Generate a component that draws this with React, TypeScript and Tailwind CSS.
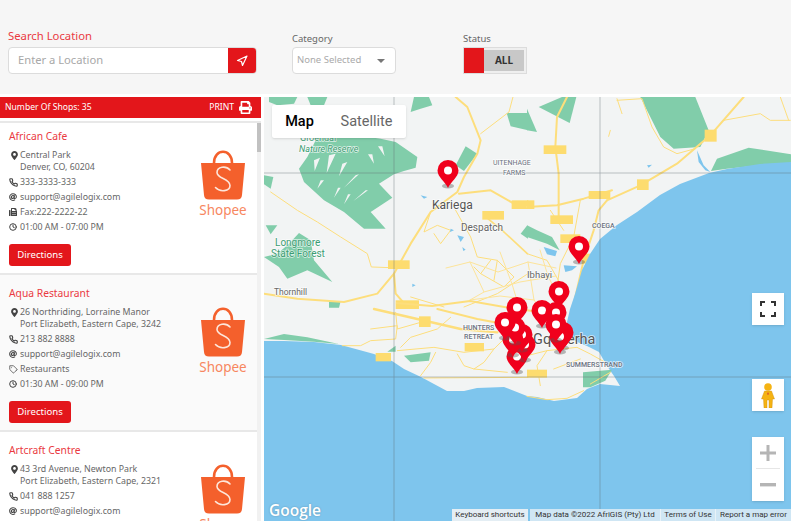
import React from "react";
import { FaMapMarkerAlt, FaFax, FaPrint, FaAt } from "react-icons/fa";
import { FiClock, FiNavigation, FiTag, FiPhone } from "react-icons/fi";

type Shop = {
  name: string;
  address: string[];
  phone: string;
  extra: { kind: "fax" | "tag"; text: string };
  hours: string;
};

const shops: Shop[] = [
  {
    name: "African Cafe",
    address: ["Central Park", "Denver, CO, 60204"],
    phone: "333-3333-333",
    extra: { kind: "fax", text: "Fax:222-2222-22" },
    hours: "01:00 AM - 07:00 PM",
  },
  {
    name: "Aqua Restaurant",
    address: ["26 Northriding, Lorraine Manor", "Port Elizabeth, Eastern Cape, 3242"],
    phone: "213 882 8888",
    extra: { kind: "tag", text: "Restaurants" },
    hours: "01:30 AM - 09:00 PM",
  },
  {
    name: "Artcraft Centre",
    address: ["43 3rd Avenue, Newton Park", "Port Elizabeth, Eastern Cape, 2321"],
    phone: "041 888 1257",
    extra: { kind: "tag", text: "Restaurants" },
    hours: "09:00 AM - 05:00 PM",
  },
];

// [centre x, top y] of each marker, back to front
const pins: [number, number][] = [
  [448, 161], [579, 237], [559, 282], [517, 298], [542, 301], [556, 303], [517, 347],
  [525, 335], [522, 325], [513, 330], [515, 318], [505, 313], [563, 323], [560, 327], [556, 315],
];

function ShopeeLogo() {
  return (
    <div className="flex w-[48px] flex-col items-center">
      <svg width="46" height="50" viewBox="0 0 46 50">
        <path d="M14 13 C14 -2 32 -2 32 13" fill="none" stroke="#f4602c" strokeWidth="2.6" />
        <path d="M1 13 H45 L42 45 Q41.7 49.5 37 49.5 H9 Q4.3 49.5 4 45 Z" fill="#f4602c" />
        <path d="M30 20 C26 15.5 17 16.5 17 22.5 C17 29 30 28 30 35.5 C30 41.5 20 42.5 15.5 37.5" fill="none" stroke="#fde6da" strokeWidth="1.6" strokeLinecap="round" />
      </svg>
      <span className="mt-[2px] text-[13.5px] leading-[17px] text-[#f7875f]">Shopee</span>
    </div>
  );
}

function Row({ icon, children }: { icon: React.ReactNode; children: React.ReactNode }) {
  return (
    <div className="mt-[3px] flex items-start first:mt-0">
      <span className="flex h-[12px] w-[11px] shrink-0 items-center text-[#444]">{icon}</span>
      <div className="leading-[12px]">{children}</div>
    </div>
  );
}

function ShopCard({ shop }: { shop: Shop }) {
  return (
    <div className="flex justify-between border-b-2 border-[#e8e8e8] pb-[7px] pl-[9px] pr-[10px] pt-[12px] first:pt-[7px] even:bg-[#fafafa]">
      <div>
        <h3 className="mb-[7px] text-[10.3px] leading-[12px] text-[#ea3a42]">{shop.name}</h3>
        <div className="text-[8.8px] text-[#666]">
          <Row icon={<FaMapMarkerAlt className="ml-[1px] text-[9px]" />}>
            {shop.address.map((line) => (
              <div key={line}>{line}</div>
            ))}
          </Row>
          <Row icon={<FiPhone className="text-[9px]" strokeWidth={3} />}>{shop.phone}</Row>
          <Row icon={<FaAt className="text-[8px]" />}>support@agilelogix.com</Row>
          <Row icon={shop.extra.kind === "fax" ? <FaFax className="text-[8px]" /> : <FiTag className="text-[9px]" />}>
            {shop.extra.text}
          </Row>
          <Row icon={<FiClock className="text-[8px]" strokeWidth={3} />}>{shop.hours}</Row>
        </div>
        <button className="mt-[11px] h-[22px] w-[62px] rounded-[3px] bg-[#e3161b] text-[9.6px] text-white">Directions</button>
      </div>
      <div className="mt-[20px]">
        <ShopeeLogo />
      </div>
    </div>
  );
}

function Pin({ x, y }: { x: number; y: number }) {
  return (
    <g transform={`translate(${x} ${y})`}>
      <ellipse cx="0" cy="25" rx="6" ry="2.5" fill="#555" opacity="0.4" />
      <path d="M0 27 C-2.5 21 -10.5 16 -10.5 9.5 A10.5 10.5 0 0 1 10.5 9.5 C10.5 16 2.5 21 0 27 Z" fill="#f0001c" />
      <circle cx="0" cy="9.5" r="4" fill="#fff" />
    </g>
  );
}

function MapArt() {
  return (
    <svg className="block h-full w-full" viewBox="264 97 527 424" fontFamily="Roboto, sans-serif">
      <rect x="264" y="97" width="527" height="424" fill="#f2f4f4" />

      {/* top left part of the map, drawn in 3x crop coordinates */}
      <g transform="translate(264 97) scale(0.3333)">
        <g fill="#81cdaa">
          <path d="M15 0 H100 L90 20 L40 25 L15 15 Z" />
          <path d="M130 0 H190 L180 25 H140 Z" />
          <path d="M450 0 H495 L505 25 L470 35 L440 45 Z" />
          <path d="M105 215 L130 180 L160 120 L280 115 L350 125 L395 135 L460 180 L455 212 L420 222 L390 232 L345 260 L385 302 L320 345 L365 395 L300 395 L240 345 L180 310 L120 255 Z" />
          <path d="M605 148 L640 170 L600 222 L575 205 Z" />
          <path d="M728 48 H792 V100 L740 88 Z" />
          <path d="M0 235 L28 240 L20 275 L0 262 Z" />
          <path d="M5 385 H40 L20 412 Z" />
          <path d="M0 480 L40 470 L75 440 L105 408 L140 430 L150 490 L205 555 L130 520 L70 545 L45 510 Z" />
          <path d="M790 385 L770 410 L792 425 Z" />
          <path d="M195 612 H230 L225 632 H195 Z" />
        </g>
        <g fill="#f2f4f4">
          <path d="M150 190 L168 182 L152 222 Z M195 175 L215 170 L188 228 Z M235 200 L250 195 L225 238 Z M275 235 L285 232 L240 272 Z M305 280 L312 280 L268 312 Z M222 272 L230 272 L210 302 Z M330 200 L312 172 L325 172 Z M362 178 L342 148 L355 148 Z M252 292 L260 292 L240 322 Z M170 250 L180 250 L160 275 Z" />
        </g>
        <g fill="none" stroke="#fdde7c" strokeLinecap="round" strokeLinejoin="round">
          <path strokeWidth="6" d="M575 0 L610 30 L650 130 L640 170 L600 240 L580 285 L500 345 L440 440 L390 530 L340 590 L240 615 L100 605 L0 590" />
          <path strokeWidth="6" d="M585 290 L680 280 L750 320 L792 320" />
          <path strokeWidth="6" d="M390 530 L395 590 L430 630" />
          <path strokeWidth="5" d="M660 355 L720 405 L790 470" />
          <path strokeWidth="3" d="M650 110 L735 45 L747 0" />
          <path strokeWidth="3" d="M20 285 L100 340 L160 375 L230 420 L310 470 L322 510 L380 512" />
          <path strokeWidth="3" d="M500 345 L480 405 L520 385 L560 400 L530 440 L510 410 M575 340 L620 420 L640 480 L700 490 L750 540 L720 570 L650 530 L630 510 M680 490 L650 530 M700 490 L690 550" />
          <path strokeWidth="3" d="M440 600 L540 630 M600 630 L700 590 L792 530" />
        </g>
        <g fill="#fddc6f">
          <rect x="372" y="490" width="65" height="26" />
          <rect x="395" y="610" width="70" height="26" />
          <rect x="743" y="310" width="50" height="26" />
          <rect x="655" y="342" width="65" height="26" />
        </g>
        <g fill="#7ec5ed">
          <path d="M580 415 L600 420 L590 435 Z M595 450 L605 458 L598 462 Z M560 395 L570 400 L558 405 Z M470 295 L490 300 L480 305 Z M445 560 L455 565 L445 570 Z" />
        </g>
      </g>

      {/* top right part */}
      <g transform="translate(527 97) scale(0.3333)">
        <g fill="#81cdaa">
          <path d="M340 0 H505 L545 100 L520 150 L440 155 L400 120 L370 60 Z" />
          <path d="M552 222 L570 185 L665 152 L792 172 V200 L700 205 L600 215 Z" />
          <path d="M35 30 L105 0 H148 L128 78 Z" />
          <path d="M0 35 L30 105 L0 100 Z" />
          <path d="M0 385 L30 400 L75 420 L98 460 L60 440 L0 420 Z" />
        </g>
        <g fill="none" stroke="#fdde7c" strokeLinecap="round" strokeLinejoin="round">
          <path strokeWidth="6" d="M120 0 L90 60 L85 150 L95 230 L95 360" />
          <path strokeWidth="6" d="M0 330 L90 325 L170 305 L255 280" />
          <path strokeWidth="6" d="M240 310 L340 265 L450 200 L550 115 L650 0" />
          <path strokeWidth="6" d="M240 310 L215 340 L200 400 L170 490 L145 600" />
          <path strokeWidth="3" d="M270 5 L285 50 M270 10 L345 5 L375 90 L410 150 L450 170 L505 155" />
          <path strokeWidth="3" d="M590 70 L700 50 L730 70 L790 70 M760 0 L785 70" />
          <path strokeWidth="3" d="M160 310 L140 420 L100 500 L90 570 M70 340 L110 400 M0 470 L60 490 L100 560" />
          <path strokeWidth="3" d="M250 100 L245 118" />
        </g>
        <g fill="#fddc6f">
          <rect x="50" y="145" width="68" height="26" />
          <rect x="185" y="282" width="65" height="24" />
          <rect x="330" y="247" width="35" height="32" />
          <rect x="533" y="98" width="36" height="36" />
          <rect x="70" y="355" width="68" height="26" />
          <rect x="100" y="412" width="60" height="26" />
          <rect x="0" y="310" width="22" height="26" />
          <rect x="165" y="470" width="25" height="30" />
        </g>
        <g fill="#7ec5ed">
          <path d="M510 160 L530 205 L550 225 L535 220 L515 195 Z" />
          <path d="M360 205 L375 203 L365 212 Z" />
          <path d="M50 450 L90 462 L85 478 L60 472 Z" />
          <path d="M110 505 L150 508 L135 520 L115 525 Z" />
        </g>
      </g>

      {/* suburbs between Despatch and the city */}
      <g fill="none" stroke="#fde49a" strokeWidth="1" strokeLinecap="round" strokeLinejoin="round">
        <path d="M470 262 L498 272 L528 262 L556 268 M484 292 L520 282 L556 276 M500 252 L512 284 L520 310 M528 262 L534 300 L548 318 M470 300 L500 296 L534 300 M446 268 L470 262 L484 292 L470 300 M540 250 L548 276 L556 292 L566 300" />
      </g>
      <path d="M396 303 L432 306 L470 301 L510 308 L540 312" fill="none" stroke="#fdde7c" strokeWidth="1.8" strokeLinejoin="round" />

      {/* water */}
      <path
        fill="#7ec5ed"
        d="M791 162 L760 164 L727 169 L709 173 L680 184 L660 195 L637 212 L617 225 L600 239 L590 254 L582 270 L575 294 L570 309 L567 322 L570 339 L587 346 L599 352 L607 366 L614 376 L620 386 L600 384 L587 389 L577 398 L554 401 L537 397 L527 396 L504 387 L477 388 L464 391 L447 391 L434 384 L421 377 L404 369 L392 361 L374 354 L341 345 L314 342 L284 341 L264 341 V521 H791 Z"
      />

      {/* lower part */}
      <g transform="translate(264 309) scale(0.3333)">
        <g fill="#81cdaa">
          <path d="M0 90 L60 75 L130 85 L225 105 L150 98 L60 93 Z" />
          <path d="M420 140 L500 130 L495 155 L440 160 Z" />
          <path d="M370 128 L395 110 L395 128 Z" />
        </g>
        <g fill="none" stroke="#fdde7c" strokeLinecap="round" strokeLinejoin="round">
          <path strokeWidth="7" d="M330 0 L460 30 L590 60 L700 70" />
          <path strokeWidth="6" d="M520 0 L640 30 L720 45" />
          <path strokeWidth="3" d="M395 10 L400 60 L470 40 M410 115 L440 85 L520 60 L560 25 M320 60 L400 50 L395 90 L320 95 L290 110 L235 110 M400 125 L510 115 L600 130 L690 120 L720 90 M580 135 L600 170 L630 180 L730 190 M470 200 L500 160 L515 130 M630 180 L660 160 L690 120 M480 207 L792 205" />
        </g>
        <g fill="#fddc6f">
          <rect x="465" y="22" width="35" height="32" />
          <rect x="335" y="132" width="46" height="25" />
          <rect x="602" y="102" width="58" height="25" />
        </g>
      </g>
      <g transform="translate(527 309) scale(0.3333)">
        <path d="M168 190 L255 182 L235 215 L190 235 L168 235 Z" fill="#81cdaa" />
        <g fill="none" stroke="#fdde7c" strokeLinecap="round" strokeLinejoin="round">
          <path strokeWidth="3" d="M0 140 L60 125 L150 115 L190 135 L235 160 M60 125 L30 170 L40 230 M0 262 L60 272 L120 268 L170 245 M80 180 L160 150 M190 225 L250 190" />
        </g>
        <rect x="0" y="182" width="60" height="24" fill="#fddc6f" />
      </g>

      {/* graticule */}
      <g stroke="#5f6a70" strokeWidth="0.7" opacity="0.55">
        <path d="M394 97 V521 M600 97 V521 M264 173 H791 M264 377 H791" />
      </g>

      {/* labels */}
      <g stroke="#fff" strokeWidth="1.5" paintOrder="stroke" strokeOpacity="0.7">
        <text x="300" y="141" fontSize="9" fill="#3d9d73">Groendal</text>
        <text x="299" y="152" fontSize="9" fontStyle="italic" fill="#3d9d73">Nature Reserve</text>
        <text x="275" y="246" fontSize="10" fill="#3d9d73">Longmore</text>
        <text x="271" y="257" fontSize="10" fill="#3d9d73">State Forest</text>
        <text x="274" y="295" fontSize="8.5" fill="#666">Thornhill</text>
        <text x="432" y="209" fontSize="12" fill="#555">Kariega</text>
        <text x="461" y="231" fontSize="10" fill="#666">Despatch</text>
        <text x="493" y="165" fontSize="7" fill="#6b7280">UITENHAGE</text>
        <text x="503" y="175" fontSize="7" fill="#6b7280">FARMS</text>
        <text x="592" y="228" fontSize="7" fontWeight="500" fill="#6b7280">COEGA</text>
        <text x="527" y="278" fontSize="9.5" fill="#666">Ibhayi</text>
        <text x="463" y="330" fontSize="7" fontWeight="500" fill="#6b7280">HUNTERS</text>
        <text x="464" y="339" fontSize="7" fontWeight="500" fill="#6b7280">RETREAT</text>
        <text x="533" y="344" fontSize="14.5" fill="#555">Gqeberha</text>
        <text x="566" y="367" fontSize="7" fontWeight="500" fill="#6b7280">SUMMERSTRAND</text>
      </g>

      {pins.map(([x, y]) => (
        <Pin key={`${x}-${y}`} x={x} y={y} />
      ))}
    </svg>
  );
}

function MapPanel() {
  return (
    <div className="relative h-full flex-1 overflow-hidden font-['Roboto',sans-serif]">
      <MapArt />

      <div className="absolute left-[8px] top-[8px] flex h-[33px] rounded-[2px] bg-white shadow-sm">
        <div className="flex w-[55px] items-center justify-center text-[14.5px] font-medium text-black">Map</div>
        <div className="flex w-[79px] items-center justify-center text-[14.5px] text-[#666]">Satellite</div>
      </div>

      <div className="absolute left-[488px] top-[196px] flex h-[32px] w-[32px] items-center justify-center bg-white shadow-sm">
        <svg width="16" height="16" viewBox="0 0 16 16" fill="none" stroke="#333" strokeWidth="2">
          <path d="M1 5 V1 H5 M11 1 H15 V5 M15 11 V15 H11 M5 15 H1 V11" />
        </svg>
      </div>

      <div className="absolute left-[488px] top-[282px] flex h-[32px] w-[32px] items-center justify-center bg-white shadow-sm">
        <svg width="14" height="25" viewBox="0 0 14 25">
          <circle cx="7" cy="4" r="3.8" fill="#f5b313" />
          <path d="M3.5 8 H10.5 L13.5 16 H11.5 L11 25 H8 V17 H6 V25 H3 L2.5 16 H0.5 Z" fill="#f5b313" stroke="#c98a0c" strokeWidth="0.4" />
          <path d="M7 9 L8 11 L7 12 L6 11 Z" fill="#d9502e" />
        </svg>
      </div>

      <div className="absolute left-[488px] top-[340px] flex h-[64px] w-[32px] flex-col items-center bg-white shadow-sm">
        <div className="flex h-[31px] items-center justify-center">
          <svg width="16" height="16" viewBox="0 0 16 16"><path d="M6.5 0 H9.5 V6.5 H16 V9.5 H9.5 V16 H6.5 V9.5 H0 V6.5 H6.5 Z" fill="#b5b5b5" /></svg>
        </div>
        <div className="h-px w-[24px] bg-[#e6e6e6]" />
        <div className="flex h-[32px] items-center justify-center">
          <svg width="16" height="4" viewBox="0 0 16 4"><rect width="16" height="3.4" fill="#b5b5b5" /></svg>
        </div>
      </div>

      <div className="absolute bottom-[2px] left-[5px] text-[15.5px] font-semibold leading-[18px] text-white [font-family:'Open_Sans',sans-serif] [text-shadow:0_0_2px_rgba(0,0,0,0.25)]">Google</div>

      <div className="absolute bottom-0 right-0 flex h-[12px] items-center text-center text-[8px] leading-[12px] text-[#333]">
        <span className="mr-[2px] h-full w-[76px] bg-[#e4eef4]">Keyboard shortcuts</span>
        <span className="h-full w-[130px] bg-[#cfe6f4]">Map data ©2022 AfriGIS (Pty) Ltd</span>
        <span className="h-full w-[55px] border-l border-[#e8f2f8] bg-[#cfe6f4]">Terms of Use</span>
        <span className="h-full w-[76px] border-l border-[#e8f2f8] bg-[#cfe6f4]">Report a map error</span>
      </div>
    </div>
  );
}

export default function App() {
  return (
    <div className="flex h-[521px] w-full flex-col overflow-hidden bg-white font-['Noto_Sans',sans-serif]">
      <header className="flex h-[94px] shrink-0 items-end bg-[#f6f6f6] pb-[20px] pl-[8px]">
        <div className="w-[249px]">
          <label className="mb-[2px] block text-[11.3px] leading-[18px] text-[#ea3a42]">Search Location</label>
          <div className="flex h-[27px] overflow-hidden rounded-[4px] border border-[#dcdcdc] bg-white">
            <div className="flex flex-1 items-center pl-[9px] text-[11.2px] text-[#a8a8a8]">Enter a Location</div>
            <button className="flex w-[28px] items-center justify-center bg-[#e3161b] text-white">
              <FiNavigation className="text-[12px]" strokeWidth={2.4} />
            </button>
          </div>
        </div>
        <div className="ml-[35px] w-[104px]">
          <label className="mb-[1px] block text-[9.5px] leading-[14px] text-[#666]">Category</label>
          <div className="flex h-[27px] items-center justify-between rounded-[4px] border border-[#dcdcdc] bg-white pl-[4px] pr-[10px]">
            <span className="text-[9.5px] text-[#aaa]">None Selected</span>
            <span className="h-0 w-0 border-x-[4px] border-t-[4px] border-x-transparent border-t-[#777]" />
          </div>
        </div>
        <div className="ml-[67px] w-[64px]">
          <label className="mb-[1px] block text-[9.5px] leading-[14px] text-[#666]">Status</label>
          <div className="flex h-[27px] border border-[#dcdcdc] bg-[#efefef] pr-[2px]">
            <span className="w-[20px] bg-[#e3161b]" />
            <span className="my-[2px] flex flex-1 items-center justify-center bg-[#c8c8c8] text-[10px] font-bold text-[#333]">ALL</span>
          </div>
        </div>
      </header>

      <div className="flex min-h-0 flex-1 flex-col pt-[3px]">
        <div className="flex min-h-0 flex-1">
          <aside className="flex h-full w-[264px] shrink-0 flex-col pr-[3px]">
            <div className="flex h-[21px] shrink-0 items-center justify-between bg-[#e3161b] pl-[5px] pr-[9px] text-[8.6px] text-white">
              <span>Number Of Shops: 35</span>
              <span className="flex items-center gap-[5px]">
                PRINT <FaPrint className="text-[13px]" />
              </span>
            </div>
            <div className="mt-[3px] flex min-h-0 flex-1 border-t-2 border-[#e8e8e8]">
              <div className="min-w-0 flex-1 overflow-hidden">
                {shops.map((shop) => (
                  <ShopCard key={shop.name} shop={shop} />
                ))}
              </div>
              <div className="w-[4px] shrink-0 bg-[#f1f1f1]">
                <div className="h-[29px] bg-[#c1c1c1]" />
              </div>
            </div>
          </aside>
          <MapPanel />
        </div>
      </div>
    </div>
  );
}
